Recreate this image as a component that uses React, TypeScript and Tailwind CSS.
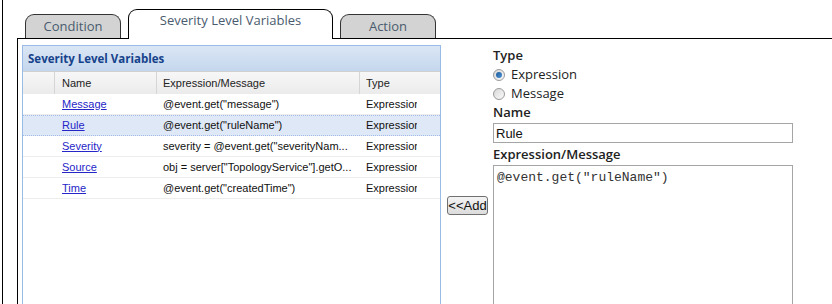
import React from 'react';

const rows = [
  { name: 'Message', expr: '@event.get("message")' },
  { name: 'Rule', expr: '@event.get("ruleName")', selected: true },
  { name: 'Severity', expr: 'severity = @event.get("severityNam...' },
  { name: 'Source', expr: 'obj = server["TopologyService"].getO...' },
  { name: 'Time', expr: '@event.get("createdTime")' },
];

const Tab = ({ label, active }: { label: string; active?: boolean }) =>
  active ? (
    <div className="relative -mb-px h-[30px] w-[205px] rounded-t-[9px] border border-b-0 border-black bg-white pt-[1px] text-center text-[13px] text-[#4a5b6e]">
      {label}
    </div>
  ) : (
    <div className="h-[24px] w-[96px] rounded-t-[9px] border border-b-0 border-[#333] bg-[#d3d3d3] pt-[2px] text-center text-[13px] text-[#4a5b6e]">
      {label}
    </div>
  );

const Radio = ({ checked, label }: { checked?: boolean; label: string }) => (
  <label className="flex items-center gap-[6px]">
    <span className="flex h-[12px] w-[12px] items-center justify-center rounded-full border border-[#9a9a9a] bg-gradient-to-br from-[#d8d8d8] to-[#fafafa]">
      {checked && <span className="h-[6px] w-[6px] rounded-full bg-gradient-to-br from-[#1c5b9c] to-[#4f93d2]" />}
    </span>
    <span>{label}</span>
  </label>
);

export default function App() {
  return (
    <div
      className="h-[304px] w-[832px] overflow-hidden bg-white pl-[2px]"
      style={{ fontFamily: '"Open Sans", "Noto Sans", sans-serif' }}
    >
      <div className="flex h-full flex-col border-l border-black pl-[14px]">
        {/* tabs */}
        <div className="flex h-[39px] shrink-0 items-end gap-[7px] border-b border-black pl-[8px]">
          <Tab label="Condition" />
          <Tab label="Severity Level Variables" active />
          <Tab label="Action" />
        </div>

        {/* content */}
        <div className="flex min-h-0 flex-1 border-l border-black pl-[4px] pt-[6px]">
          {/* grid panel */}
          <div className="flex w-[419px] shrink-0 flex-col border border-b-0 border-[#99bbe8]">
            <div className="flex h-[25px] items-center bg-gradient-to-b from-[#dae6f4] to-[#c5d7ee] pl-[5px] text-[11.5px] font-bold text-[#15428b]">
              Severity Level Variables
            </div>
            <div
              className="grid h-[23px] grid-cols-[32px_102px_203px_1fr] border-t border-[#d0d0d0] bg-gradient-to-b from-[#f7f7f7] to-[#ebebeb] text-[11px] text-[#222]"
              style={{ fontFamily: '"Liberation Sans", Arial, sans-serif' }}
            >
              <div className="border-r border-[#d5d5d5]" />
              <div className="flex items-center border-r border-[#d5d5d5] pl-[7px]">Name</div>
              <div className="flex items-center border-r border-[#d5d5d5] pl-[6px]">Expression/Message</div>
              <div className="flex items-center pl-[6px]">Type</div>
            </div>
            <div style={{ fontFamily: '"Liberation Sans", Arial, sans-serif' }} className="text-[11px] text-[#111]">
              {rows.map((r) => (
                <div
                  key={r.name}
                  className={`grid h-[21px] grid-cols-[32px_102px_203px_1fr] items-center ${
                    r.selected
                      ? 'border-y border-dotted border-[#a3bae9] bg-[#dfe8f6]'
                      : 'border-b border-[#ededed]'
                  }`}
                >
                  <div />
                  <div className="pl-[7px]">
                    <span className="cursor-pointer text-[#2626c8] underline">{r.name}</span>
                  </div>
                  <div className="truncate pl-[6px]">{r.expr}</div>
                  <div className="w-[57px] overflow-hidden whitespace-nowrap pl-[6px]">Expression</div>
                </div>
              ))}
            </div>
          </div>

          {/* add button */}
          <div className="w-[52px] shrink-0 pl-[6px] pt-[147px]">
            <button
              className="h-[19px] w-[41px] rounded-[3px] border border-[#707070] bg-gradient-to-b from-[#f4f4f4] to-[#dcdcdc] text-[13px] leading-none text-[#111]"
              style={{ fontFamily: '"Liberation Sans", Arial, sans-serif' }}
            >
              &lt;&lt;Add
            </button>
          </div>

          {/* form */}
          <div className="flex w-[300px] shrink-0 flex-col text-[13px] text-[#222]">
            <div className="flex h-[21px] shrink-0 items-center font-semibold">Type</div>
            <div className="flex h-[18px] shrink-0 items-center">
              <Radio checked label="Expression" />
            </div>
            <div className="flex h-[19px] shrink-0 items-center">
              <Radio label="Message" />
            </div>
            <div className="flex h-[20px] shrink-0 items-center font-semibold">Name</div>
            <input
              readOnly
              value="Rule"
              className="h-[20px] w-[300px] shrink-0 border border-[#a5a5a5] px-[2px] text-[13px] text-[#111] outline-none"
              style={{ fontFamily: '"Liberation Sans", Arial, sans-serif' }}
            />
            <div className="mt-[2px] flex h-[20px] shrink-0 items-center font-semibold">Expression/Message</div>
            <textarea
              readOnly
              value={'@event.get("ruleName")'}
              className="h-[200px] w-[300px] shrink-0 resize-none border border-[#a5a5a5] px-[3px] py-[4px] text-[13px] leading-[16px] text-[#333] outline-none"
              style={{ fontFamily: '"Liberation Mono", "Courier New", monospace' }}
            />
          </div>
        </div>
      </div>
    </div>
  );
}
